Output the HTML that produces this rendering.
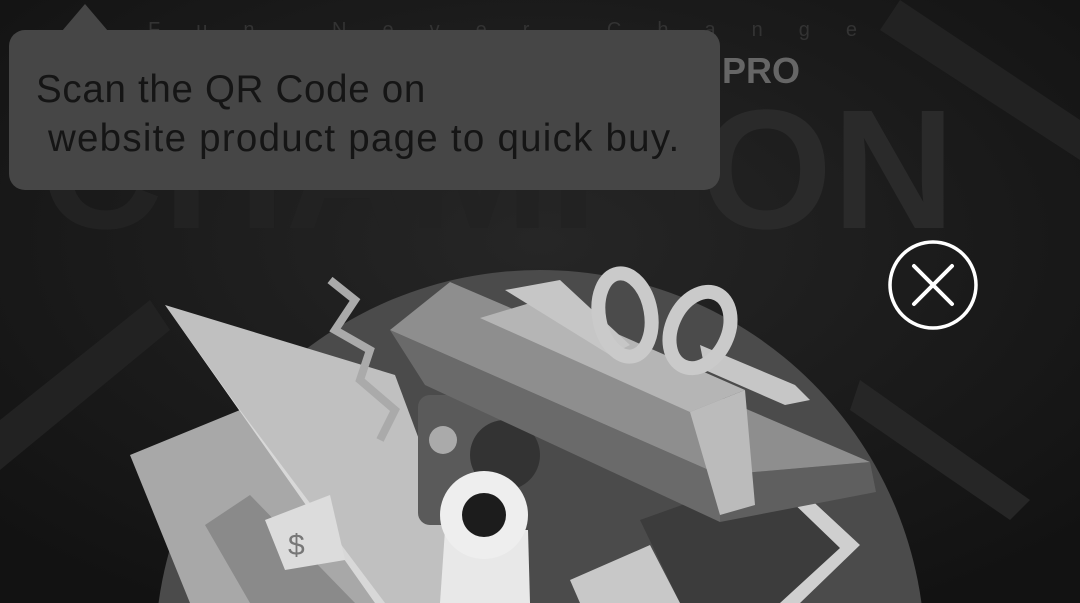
<!DOCTYPE html>
<html><head><style>
html,body{margin:0;padding:0;width:1080px;height:603px;overflow:hidden;background:#161616;font-family:"Liberation Sans",sans-serif}
.tip{position:absolute;left:9px;top:30px;width:711px;height:160px;background:#464646;border-radius:16px}
.arrow{position:absolute;left:62px;top:4px;width:0;height:0;border-left:23px solid transparent;border-right:23px solid transparent;border-bottom:27px solid #464646}
.t{position:absolute;color:#151515;font-size:38.5px;white-space:pre;line-height:1}
</style></head><body>
<svg width="1080" height="603" style="position:absolute;left:0;top:0;overflow:hidden">
<defs><radialGradient id="bg" cx="0.5" cy="0.4" r="0.7"><stop offset="0" stop-color="#262626"/><stop offset="1" stop-color="#121212"/></radialGradient></defs>
<rect width="1080" height="603" fill="url(#bg)"/>
<text x="148" y="36" fill="#333" font-size="20" letter-spacing="36" font-family="Liberation Sans">Fun Never Changes</text>
<text x="722" y="83" fill="#666" font-size="36" font-weight="bold" font-family="Liberation Sans">PRO</text>
<text x="700" y="228" fill="#2a2a2a" font-size="170" font-weight="bold" font-family="Liberation Sans">ON</text>
<text x="40" y="228" fill="#222" font-size="170" font-weight="bold" font-family="Liberation Sans">CHAMPI</text>
<path d="M900 0 L1080 120 L1080 160 L880 30Z" fill="#222"/>
<path d="M860 380 L1030 500 L1010 520 L850 410Z" fill="#262626"/>
<path d="M0 420 L150 300 L170 330 L0 470Z" fill="#222"/>
<circle cx="540" cy="655" r="385" fill="#4b4b4b"/>
<!-- laptop -->
<path d="M130 455 L240 410 L420 603 L190 603Z" fill="#a8a8a8"/>
<path d="M205 525 L250 495 L355 603 L250 603Z" fill="#8a8a8a"/>
<path d="M165 305 L395 375 L480 603 L375 603Z" fill="#c0c0c0"/>
<path d="M165 305 L240 410 L385 603 L375 603 L170 312Z" fill="#d8d8d8"/>
<path d="M265 520 L330 495 L345 560 L285 570Z" fill="#dcdcdc"/>
<text x="288" y="555" fill="#777" font-size="30" font-family="Liberation Sans">$</text>
<!-- camera -->
<rect x="418" y="395" width="100" height="130" rx="12" fill="#5a5a5a"/>
<circle cx="443" cy="440" r="14" fill="#aaa"/>
<circle cx="505" cy="455" r="35" fill="#333"/>
<!-- phone -->
<path d="M640 520 L780 470 L860 545 L790 603 L680 603Z" fill="#3c3c3c"/>
<path d="M790 480 L860 545 L800 603 L780 603 L840 548 L785 495Z" fill="#cfcfcf"/>
<!-- tickets -->
<path d="M570 580 L650 545 L680 603 L580 603Z" fill="#c8c8c8"/>
<!-- gift box -->
<path d="M390 330 L720 475 L720 522 L425 385Z" fill="#6a6a6a"/>
<path d="M720 475 L870 462 L876 492 L720 522Z" fill="#5f5f5f"/>
<path d="M390 330 L450 282 L870 462 L720 475Z" fill="#8e8e8e"/>
<path d="M480 318 L540 300 L745 390 L690 412Z" fill="#b5b5b5"/>
<path d="M690 412 L745 390 L755 505 L720 515Z" fill="#bbbbbb"/>
<path d="M700 345 L795 385 L810 400 L785 405 L705 370Z" fill="#c6c6c6"/>
<path d="M505 290 L560 280 L630 345 L610 355Z" fill="#c6c6c6"/>
<ellipse cx="625" cy="315" rx="26" ry="42" fill="none" stroke="#cacaca" stroke-width="14" transform="rotate(-10 625 315)"/>
<ellipse cx="700" cy="330" rx="28" ry="40" fill="none" stroke="#cacaca" stroke-width="14" transform="rotate(25 700 330)"/>
<path d="M330 280 L355 300 L335 330 L370 350 L360 380 L395 410 L380 440" fill="none" stroke="#aaa" stroke-width="8"/>
<!-- webcam -->
<path d="M440 603 L445 530 L528 530 L530 603Z" fill="#e8e8e8"/>
<circle cx="484" cy="515" r="44" fill="#eeeeee"/>
<circle cx="484" cy="515" r="22" fill="#1c1c1c"/>
<!-- close -->
<circle cx="933" cy="285" r="43" fill="none" stroke="#fff" stroke-width="3.5"/>
<path d="M914 266 L952 304 M952 266 L914 304" stroke="#fff" stroke-width="4" stroke-linecap="round"/>
</svg>
<div class="arrow"></div>
<div class="tip"></div>
<div class="t" style="left:36px;top:71px;letter-spacing:0.7px">Scan the QR Code on</div>
<div class="t" style="left:36px;top:120px;letter-spacing:1.25px"> website product page to quick buy.</div>
</body></html>
